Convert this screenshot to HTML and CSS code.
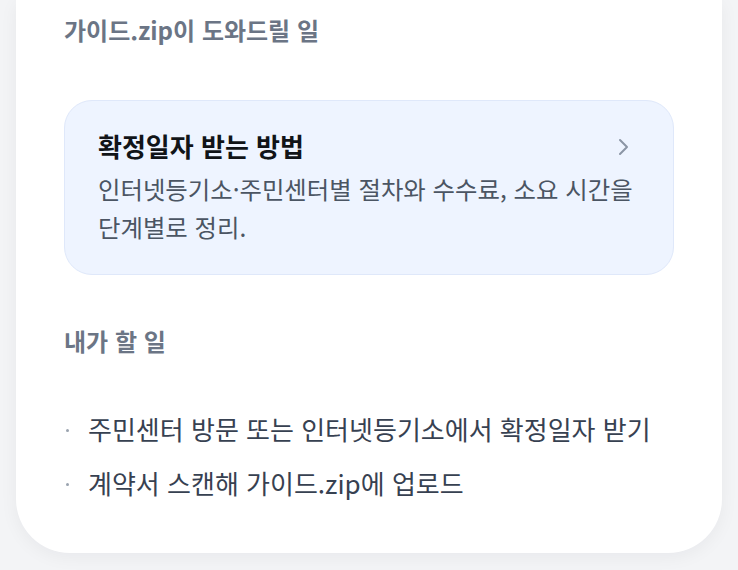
FILE: index.html
```html
<!DOCTYPE html>
<html lang="ko">
<head>
<meta charset="utf-8">
<link rel="stylesheet" href="styles.css">
</head>
<body>
<div class="page">
  <section class="card">
    <h2 class="section-title">가이드.zip이 도와드릴 일</h2>
    <a class="guide" href="#">
      <div class="guide-text">
        <div class="guide-title">확정일자 받는 방법</div>
        <p class="guide-desc">인터넷등기소·주민센터별 절차와 수수료, 소요 시간을<br>단계별로 정리.</p>
      </div>
      <svg class="chev" width="14" height="20" viewBox="0 0 14 20" aria-hidden="true">
        <path d="M3 3 L10 10 L3 17" fill="none" stroke="#8b95a5" stroke-width="2" stroke-linecap="round" stroke-linejoin="round"/>
      </svg>
    </a>
    <h2 class="section-title todo-title">내가 할 일</h2>
    <ul class="todo">
      <li>주민센터 방문 또는 인터넷등기소에서 확정일자 받기</li>
      <li>계약서 스캔해 가이드.zip에 업로드</li>
    </ul>
  </section>
</div>
</body>
</html>
```
FILE: styles.css
```css
* { box-sizing: border-box; }
html, body { margin: 0; padding: 0; }
body {
  background: #f3f4f6;
  font-family: "Noto Sans CJK KR", "Noto Sans", sans-serif;
  width: 738px;
  height: 570px;
  overflow: hidden;
}
.page {
  padding: 0 16px;
}
.card {
  background: #ffffff;
  border-radius: 0 0 54px 54px;
  box-shadow: 0 4px 18px rgba(15, 23, 42, 0.05);
  padding: 12px 48px 40px 48px;
  height: 553px;
}
.section-title {
  margin: 0;
  font-size: 24px;
  font-weight: 700;
  color: #6b7585;
  line-height: 36px;
}
.guide {
  display: flex;
  align-items: flex-start;
  margin-top: 52px;
  background: #eef4ff;
  border: 1.5px solid #dfe8fa;
  border-radius: 28px;
  padding: 26px 42px 28px 33px;
  text-decoration: none;
  height: 175px;
}
.guide-text { flex: 1; min-width: 0; }
.guide-title {
  font-size: 26px;
  font-weight: 700;
  color: #111418;
  line-height: 38px;
}
.guide-desc {
  margin: 5px 0 0;
  font-size: 24.4px;
  font-weight: 400;
  color: #4b5563;
  line-height: 38px;
  white-space: nowrap;
}
.chev { margin-top: 10px; flex: none; }
.todo-title { margin-top: 48px; }
.todo {
  list-style: none;
  margin: 43px 0 0;
  padding: 0;
}
.todo li {
  position: relative;
  padding-left: 24px;
  font-size: 26px;
  color: #374151;
  line-height: 54px;
}
.todo li::before {
  content: "";
  position: absolute;
  left: 2px;
  top: 27px;
  width: 3px;
  height: 3px;
  border-radius: 50%;
  background: #9aa3af;
}
```
